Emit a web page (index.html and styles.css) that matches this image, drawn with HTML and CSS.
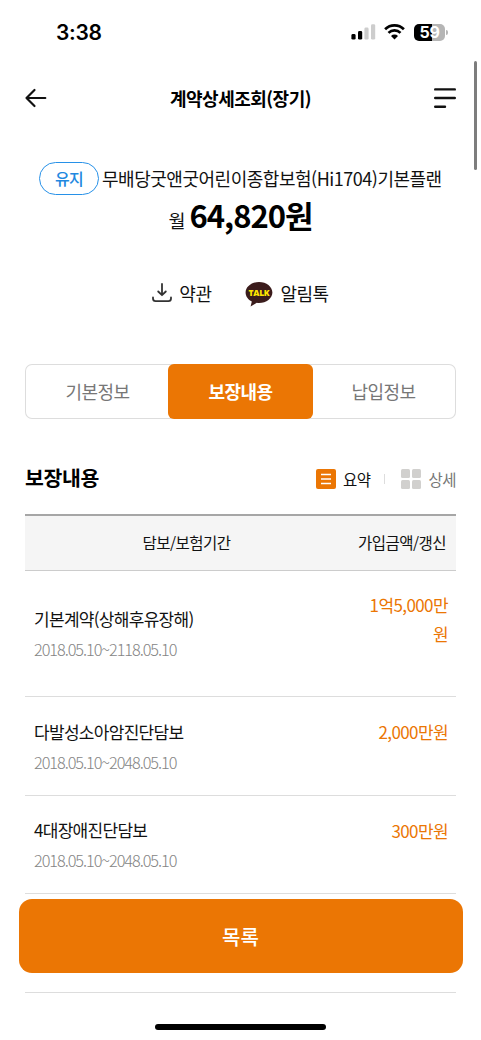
FILE: index.html
```html
<!DOCTYPE html>
<html lang="ko">
<head>
<meta charset="utf-8">
<title>계약상세조회(장기)</title>
<link rel="stylesheet" href="styles.css">
</head>
<body>
<div class="screen">
  <div class="status-bar">
    <span class="clock">3:38</span>
    <div class="status-icons">
      <svg width="25" height="16" viewBox="0 0 25 16"><rect x="0.4" y="10" width="4.2" height="5.600" rx="1.400"/><rect x="7" y="7" width="4.200" height="8.600" rx="1.400"/><g fill="#cdcdcd"><rect x="13.400" y="3.600" width="4.200" height="12" rx="1.400"/><rect x="20" y="0.200" width="4.200" height="15.400" rx="1.400"/></g></svg>
      <svg class="wifi" width="21" height="16" viewBox="0 0 21 16"><g fill="none" stroke="#000" stroke-width="2.700"><path d="M1.100 5.300a13.400 13.400 0 0 1 18.800 0"/><path d="M4.500 8.900a8.600 8.600 0 0 1 12 0"/></g><path d="M10.500 15.600l-3.500-3.600a4.900 4.900 0 0 1 7 0z"/></svg>
      <span class="battery"><span class="battery-level">59</span></span>
    </div>
  </div>
  <header class="app-header">
    <svg width="22" height="20" viewBox="0 0 22 20" fill="none" stroke="#111" stroke-width="2.200" stroke-linecap="round" stroke-linejoin="round"><path d="M20.300 10H1.500M9.500 2L1.500 10l8 8"/></svg>
    <h1 class="title">계약상세조회(장기)</h1>
    <svg width="22" height="22" viewBox="0 0 22 22" fill="none" stroke="#111" stroke-width="2.400" stroke-linecap="round"><path d="M1.200 2.400h19.600M1.200 11h19.600M1.200 19.700h9.800"/></svg>
  </header>
  <section class="product">
    <div class="product-name"><span class="badge">유지</span><span class="name">무배당굿앤굿어린이종합보험(Hi1704)기본플랜</span></div>
    <p class="premium"><span class="per">월</span><strong class="price">64,820원</strong></p>
    <div class="links">
      <span class="link"><svg width="20" height="20" viewBox="0 0 20 20" fill="none" stroke="#333" stroke-width="1.800" stroke-linecap="round" stroke-linejoin="round"><path d="M10 1v11M6.200 8.500L10 12.200l3.800-3.700M1 14.400v1.200q0 2.600 2.600 2.600h12.800q2.600 0 2.600-2.600v-1.200"/></svg><span class="terms">약관</span></span>
      <span class="link"><svg width="28" height="26" viewBox="0 0 28 26"><path fill="#3b1c1c" d="M14 1C6.500 1 .6 5.700.6 11.600c0 4 2.600 7.300 6.200 9L5.600 25.500l6.200-3.700q1.100.2 2.200.2c7.500 0 13.400-4.700 13.400-10.500S21.500 1 14 1z"/><text class="talk" x="14" y="15.300" text-anchor="middle">TALK</text></svg><span class="alarm">알림톡</span></span>
    </div>
  </section>
  <nav class="tabs"><span class="tab">기본정보</span><span class="tab active">보장내용</span><span class="tab">납입정보</span></nav>
  <section class="coverage">
    <div class="coverage-head">
      <h2 class="heading">보장내용</h2>
      <div class="views">
        <svg width="20" height="20" viewBox="0 0 20 20"><rect width="20" height="20" rx="2" fill="#eb7604"/><path d="M5 5.500h10M5 10h10M5 14.500h10" stroke="#fff" stroke-width="1.300"/></svg>
        <span class="view selected">요약</span><i class="divider"></i>
        <svg width="20" height="20" viewBox="0 0 20 20" fill="#d1d0ce"><rect width="9" height="9" rx="1.500"/><rect x="11" width="9" height="9" rx="1.500"/><rect y="11" width="9" height="9" rx="1.500"/><rect x="11" y="11" width="9" height="9" rx="1.500"/></svg>
        <span class="view">상세</span>
      </div>
    </div>
    <div class="table">
      <div class="thead"><span class="th-name">담보/보험기간</span><span class="th-amount">가입금액/갱신</span></div>
      <div class="row tall"><div><div class="item">기본계약(상해후유장해)</div><div class="period">2018.05.10~2118.05.10</div></div><div class="amount">1억5,000만<br>원</div></div>
      <div class="row"><div><div class="item">다발성소아암진단담보</div><div class="period">2018.05.10~2048.05.10</div></div><div class="amount">2,000만원</div></div>
      <div class="row"><div><div class="item">4대장애진단담보</div><div class="period">2018.05.10~2048.05.10</div></div><div class="amount">300만원</div></div>
      <div class="row"></div>
    </div>
  </section>
  <button class="list-button">목록</button>
  <div class="scrollbar"></div>
  <div class="home-indicator"></div>
</div>
</body>
</html>
```
FILE: styles.css
```css
* { box-sizing: border-box; }
body { margin: 0; background: #fff; }
h1, h2, p { margin: 0; }
svg { display: block; flex: none; overflow: visible; }
.screen { position: relative; width: 481px; height: 1040px; overflow: hidden; font-family: "Noto Sans CJK KR", sans-serif; color: #111; white-space: nowrap; background: #fff; }
.status-bar { height: 64px; display: flex; justify-content: space-between; padding: 0 33px 0 56px; align-items: center; }
.clock { font: 600 21px/26px Inter, sans-serif; color: #000; letter-spacing: -0.3px; padding-top: 1px; }
.status-icons { display: flex; align-items: center; }
.wifi { margin: 0 9px 0 8px; }
.battery { position: relative; width: 31px; height: 17px; margin-right: 3px; border-radius: 5px; background: linear-gradient(90deg, #000 59%, #b5b5b5 59%); }
.battery::after { content: ""; position: absolute; left: 32px; top: 6px; width: 2px; height: 5px; border-radius: 0 2px 2px 0; background: #b5b5b5; }
.battery-level { display: block; text-align: center; font: 700 16px/17px Inter, sans-serif; letter-spacing: -0.3px; color: #fff; }
.app-header { height: 68px; display: flex; align-items: center; justify-content: space-between; padding: 0 25px; }
.title { font-size: 18px; line-height: 28px; font-weight: 700; letter-spacing: -0.5px; color: #000; }
.product { height: 232px; padding-top: 30px; }
.product-name { height: 33px; display: flex; padding-left: 39px; align-items: center; }
.badge { width: 60px; height: 33px; border: 1.500px solid #2791e8; border-radius: 17px; color: #2288df; text-align: center; font-size: 16px; line-height: 31px; font-weight: 500; letter-spacing: -0.6px; margin-right: 3px; }
.name { font-size: 18px; line-height: 28px; letter-spacing: -0.48px; padding-bottom: 2px; }
.premium { display: flex; justify-content: center; align-items: baseline; height: 40px; line-height: 40px; }
.per { font-size: 18.500px; margin-right: 4px; }
.price { font-size: 31px; letter-spacing: -1px; color: #000; }
.links { display: flex; justify-content: center; gap: 34px; padding-top: 43px; }
.link { display: flex; align-items: center; gap: 7px; height: 30px; font-size: 18px; letter-spacing: -0.5px; }
.link:first-child { margin-left: 0; }
.link:last-child svg { margin-top: 1px; }
.talk { font: 800 8.500px/1 "Open Sans", sans-serif; fill: #ffe600; letter-spacing: -0.3px; }
.tabs { margin: 0 25px; height: 55px; border-radius: 7px; box-shadow: inset 0 0 0 1px #ddd; display: grid; grid-template-columns: 143px 145px 143px; }
.tab { text-align: center; font-size: 18px; line-height: 55px; letter-spacing: -0.5px; color: #777; }
.tab:first-child { padding-left: 2px; }
.tab:last-child { padding-right: 2px; }
.active { background: #eb7604; color: #fff; font-weight: 700; border-radius: 6px; }
.coverage { margin: 0 25px; }
.coverage-head { display: flex; height: 95px; justify-content: space-between; padding-top: 39px; }
.heading { font-size: 20.500px; line-height: 39px; letter-spacing: -0.4px; color: #000; }
.views { display: flex; align-items: center; height: 42px; }
.view { font-size: 15.500px; line-height: 22px; letter-spacing: -0.5px; color: #777; margin-left: 7px; padding-bottom: 1px; }
.selected { color: #111; }
.divider { width: 1px; height: 10px; background: #ddd; margin: 0 16px 0 14px; }
.thead { height: 56.500px; border-top: 2px solid #a6a6a6; border-bottom: 1px solid #ccc; background: #f5f5f5; display: grid; grid-template-columns: 323px 1fr; text-align: center; align-items: center; padding-bottom: 2px; font-size: 15.500px; letter-spacing: -0.5px; }
.row { height: 98.500px; border-bottom: 1px solid #ddd; padding: 2px 8px 0 9px; display: flex; justify-content: space-between; align-items: center; }
.tall { height: 126.500px; }
.item { font-size: 17px; line-height: 31px; letter-spacing: -0.7px; }
.period { font-size: 16.300px; line-height: 31px; letter-spacing: -1.050px; color: #858585; font-weight: 300; }
.amount { font-size: 17px; line-height: 29.500px; padding-bottom: 30px; letter-spacing: -0.6px; color: #eb7604; text-align: right; }
.list-button { position: absolute; left: 18.500px; top: 899px; width: 444px; height: 74px; padding: 0; border: 0; border-radius: 13px; background: #eb7604; color: #fff; font: 500 20px/76px "Noto Sans CJK KR", sans-serif; }
.scrollbar { position: absolute; left: 473.500px; top: 61px; width: 3.500px; height: 109px; border-radius: 2px; background: #7d7d7d; }
.home-indicator { position: absolute; left: 155px; top: 1024px; width: 171px; height: 6px; border-radius: 3px; background: #000; }
```
